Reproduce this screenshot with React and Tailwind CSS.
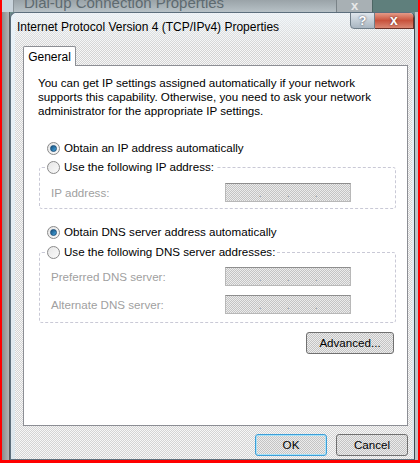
import React from 'react'

const dither = 'bg-[repeating-conic-gradient(#d4d4d4_0_25%,#f7f7f7_0_50%)] bg-size-[2px_2px]'
const ditherDark = 'bg-[repeating-conic-gradient(#c4c4c4_0_25%,#ececec_0_50%)] bg-size-[2px_2px]'

function Radio({ checked }) {
  return (
    <span className="w-[13px] h-[13px] rounded-full border border-[#8a8a8a] bg-gradient-to-br from-[#e6e6e6] to-[#fafafa] flex items-center justify-center shrink-0">
      {checked && <span className="w-[7px] h-[7px] rounded-full bg-gradient-to-br from-[#13507e] to-[#48a6e0] border border-[#1b4f7a]" />}
    </span>
  )
}

function RadioRow({ checked, label }) {
  return (
    <div className="flex items-center gap-[4px] h-[16px] text-black">
      <Radio checked={checked} />
      <span>{label}</span>
    </div>
  )
}

function IpBox() {
  return (
    <div className={`w-[126px] h-[19px] border border-[#b8b8b8] border-t-[#8e8e8e] ${ditherDark} flex items-center justify-around px-[20px] text-[#9a9a9a]`}>
      <span>.</span>
      <span>.</span>
      <span>.</span>
    </div>
  )
}

function Field({ label }) {
  return (
    <div className="flex items-center h-[19px] pl-[11px]">
      <span className="w-[174px] text-[#a0a0a0]">{label}</span>
      <IpBox />
    </div>
  )
}

function Group({ legend, children, className }) {
  return (
    <fieldset className={`w-[357px] ml-[1px] border border-dashed border-[#c9c9d6] rounded-[3px] ${className}`}>
      <legend className="ml-[5px] px-[2px] bg-white">
        <RadioRow label={legend} />
      </legend>
      {children}
    </fieldset>
  )
}

function Button({ children, focus, className }) {
  return (
    <div
      className={`h-[22px] w-[72px] rounded-[3px] border ${focus ? 'border-[#3c9ed8] shadow-[inset_0_0_0_1px_#a8e2f8]' : 'border-[#707070]'} ${ditherDark} flex items-center justify-center text-black ${className}`}
    >
      {children}
    </div>
  )
}

export default function App() {
  return (
    <div className="w-[420px] h-[464px] bg-white overflow-hidden font-['Liberation_Sans',Arial,sans-serif] text-[11.6px]">
      <div className="w-full h-[463px] border-l-2 border-r-2 border-b-[3px] border-[#ff0000] bg-[#6d8d8b] flex flex-col">
        {/* background window title strip */}
        <div className="h-[12px] flex bg-gradient-to-b from-[#9aa3a8] to-[#b7c1c6] overflow-hidden">
          <div className="w-[12px] h-[12px] bg-[#c9d4dc] border-r border-[#8a9399]" />
          <span className="ml-[10px] -mt-[6px] text-[15px] text-[#5e6a70] leading-[18px]">Dial-up Connection Properties</span>
          <div className="ml-auto flex h-[12px]">
            <div className="w-[36px] bg-[#a8b0b4] border-l border-[#7a8388] flex justify-center text-[#e8e8e8] -mt-[4px] text-[13px] font-bold">x</div>
            <div className="w-[46px] bg-[#5f7f7c] border-l border-[#4d6664]" />
          </div>
        </div>
        <div className="flex flex-1 min-h-0">
          {/* background window left frame */}
          <div className="w-[8px] bg-gradient-to-r from-[#8c8c8c] to-[#b4b4b4] border-r border-[#5a5a5a]" />
          {/* front dialog */}
          <div className="flex-1 flex flex-col rounded-t-[6px] border border-[#5c6e7c] border-r-[#40484f] bg-gradient-to-b from-[#e9f2f8] to-[#dde6ec] overflow-hidden">
            <div className={`flex-1 flex flex-col ml-[4px] mr-[2px] ${dither}`}>
              {/* title bar */}
              <div className="h-[33px] flex bg-gradient-to-b from-[#eef4f8]/80 to-transparent">
                <span className="ml-[2px] mt-[5px] text-[12px] text-black">Internet Protocol Version 4 (TCP/IPv4) Properties</span>
                <div className="ml-auto flex h-[17px] -mt-px -mr-[2px]">
                  <div className="w-[25px] rounded-bl-[4px] border border-[#6f7d88] bg-gradient-to-b from-[#dfe6ec] to-[#a9b6c1] flex items-center justify-center text-white text-[13px] font-bold [text-shadow:0_0_2px_#334]">?</div>
                  <div className="w-[39px] border border-l-0 border-[#6a2f25] bg-gradient-to-b from-[#e59a87] via-[#c8523c] to-[#d98672] flex items-center justify-center text-white text-[14px] font-bold [text-shadow:0_0_2px_#522]">x</div>
                </div>
              </div>
              {/* tab */}
              <div className="pl-[8px] flex">
                <div className="h-[20px] w-[53px] -mb-px relative z-10 bg-white border border-b-0 border-[#8c8e94] rounded-t-[2px] flex items-center justify-center text-[12px] text-black">
                  General
                </div>
              </div>
              {/* panel */}
              <div className="ml-[8px] mr-[4px] h-[361px] bg-white border border-[#8c8e94] pl-[14px] pr-[12px] pt-[10px] flex flex-col text-black">
                <p className="leading-[14px]">
                  You can get IP settings assigned automatically if your network<br />
                  supports this capability. Otherwise, you need to ask your network<br />
                  administrator for the appropriate IP settings.
                </p>
                <div className="mt-[22px] ml-[9px]">
                  <RadioRow checked label="Obtain an IP address automatically" />
                </div>
                <Group legend="Use the following IP address:" className="mt-[3px] pb-[6px]">
                  <div className="mt-[8px]">
                    <Field label="IP address:" />
                  </div>
                </Group>
                <div className="mt-[15px] ml-[9px]">
                  <RadioRow checked label="Obtain DNS server address automatically" />
                </div>
                <Group legend="Use the following DNS server addresses:" className="mt-[4px] pb-[8px]">
                  <div className="mt-[7px] flex flex-col gap-[9px]">
                    <Field label="Preferred DNS server:" />
                    <Field label="Alternate DNS server:" />
                  </div>
                </Group>
                <div className="mt-[9px] flex justify-end pr-[1px]">
                  <Button className="w-[88px] h-[21px]">Advanced...</Button>
                </div>
              </div>
              {/* footer */}
              <div className="flex justify-end gap-[9px] mt-[8px] mr-[4px]">
                <Button focus>OK</Button>
                <Button>Cancel</Button>
              </div>
            </div>
          </div>
          <div className="w-[3px] bg-[#b9c2c6]" />
        </div>
      </div>
    </div>
  )
}
